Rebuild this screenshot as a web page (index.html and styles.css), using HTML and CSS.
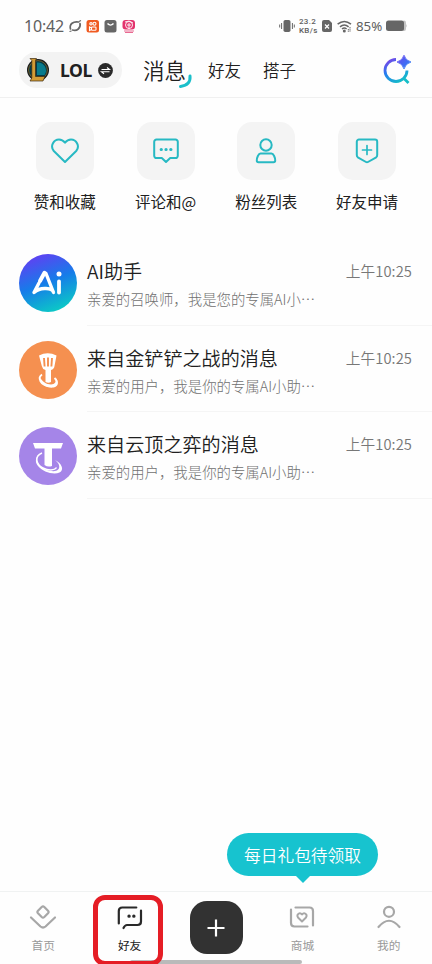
FILE: index.html
```html
<!DOCTYPE html>
<html lang="zh-CN">
<head>
<meta charset="utf-8">
<meta name="viewport" content="width=device-width, initial-scale=1">
<title>消息</title>
<link rel="stylesheet" href="styles.css">
</head>
<body>
<div class="app">
  <div class="status">
    <span class="clock">10:42</span>
    <svg class="status-left" width="70" height="16" viewBox="0 0 70 16">
      <g fill="none" stroke="#666" stroke-width="1.7" stroke-linecap="round"><path d="M2.500 11C1 6 5.500 3 10.500 4"/><path d="M12 5.500c1 4.500-3 8-7.500 6.500"/></g><path d="M1.500 13.500l2-.5M11 3.500l2-1" stroke="#666" stroke-width="1.200"/>
      <rect x="18.500" y="2" width="12.500" height="12.500" rx="2.500" fill="#f05a20"/>
      <g fill="none" stroke="#fff" stroke-width="1.100"><circle cx="23" cy="5.800" r="1.200"/><circle cx="26.500" cy="5.800" r="1.500"/><rect x="23.500" y="9" width="4.500" height="3.200" rx=".8"/><path d="M23.500 10l-2-1v3.500l2-1"/></g>
      <rect x="36.500" y="2" width="12" height="12.500" rx="2.500" fill="#666"/>
      <path d="M39.500 5.500q3 3.200 6 0" fill="none" stroke="#fff" stroke-width="1.400"/>
      <rect x="54.500" y="2" width="12.500" height="9.500" rx="3" fill="#e3336d"/>
      <path d="M56 13h10M57 14.500h8" stroke="#e86a91" stroke-width="1.200"/>
      <g fill="none" stroke="#fff" stroke-width=".9"><circle cx="61" cy="7" r="3.500"/><path d="M57 4l4-1 4 2M59 7h4M61 5v6"/></g>
    </svg>
    <svg class="vibrate" width="16" height="14" viewBox="0 0 16 14"><rect x="4.500" y="1" width="7" height="12" rx="1.800" fill="#666"/><path d="M2.600 4v6M.7 5.500v3M13.400 4v6M15.300 5.500v3" stroke="#666" stroke-width="1"/></svg>
    <span class="speed"><span>23.2</span><span>KB/s</span></span>
    <svg class="sim" width="10" height="12" viewBox="0 0 10 12"><path d="M2 0h5l3 3v7a2 2 0 0 1-2 2H2a2 2 0 0 1-2-2V2a2 2 0 0 1 2-2z" fill="#666"/><path d="M3 4.500l4 4m0-4l-4 4" stroke="#fff" stroke-width="1.200"/></svg>
    <svg class="wifi" width="15" height="13" viewBox="0 0 15 13"><g fill="none" stroke="#666" stroke-width="1.500"><path d="M.6 4.200q6.700-5.500 13.400 0M3 6.800q4.300-3.500 8.600 0M5 9q2.300-1.800 4.600 0"/></g><circle cx="7.300" cy="11" r="1.500" fill="#666"/><path d="M13 7v5M11.300 9v3" stroke="#666" stroke-width="1" stroke-dasharray="1.500 .7"/></svg>
    <span class="percent">85%</span>
    <svg class="battery" width="21" height="12" viewBox="0 0 21 12"><rect x="16" y=".5" width="4" height="10.500" rx="2" fill="#c4c4c4"/><path d="M19.500 3.500q2.500 2.300 0 4.600" fill="#c4c4c4"/><rect x="0" y=".5" width="18" height="10.500" rx="2.500" fill="#666"/></svg>
  </div>

  <header class="header">
    <div class="game">
      <svg class="game-logo" width="24" height="26" viewBox="0 0 24 26">
        <circle cx="12" cy="13" r="11" fill="#15191b"/><circle cx="12" cy="13" r="9.400" fill="#063a46" stroke="#9a752c" stroke-width=".7"/>
        <path d="M11 5.500a8 8 0 0 1 7.500 12.500H11z" fill="#087b8c"/>
        <path d="M4 1.500h6.500l-1 2v16H19l-2 4.500H4L5.800 21V3.500z" fill="#d19b36" stroke="#3c2b12" stroke-width=".7"/>
      </svg>
      <b>LOL</b>
      <svg width="15" height="15" viewBox="0 0 15 15"><circle cx="7.500" cy="7.500" r="7.400" fill="#292929"/><path d="M3.500 6.500h8L9 4.500M11.500 8.700h-8L6 10.700" fill="none" stroke="#fff" stroke-width="1.100"/></svg>
    </div>
    <nav class="tabs">
      <span class="tab current">消息<svg class="swoosh" width="15" height="15" viewBox="0 0 15 15"><path d="M12 2q1 9-9.500 10.500" fill="none" stroke="#1abfca" stroke-width="3" stroke-linecap="round"/></svg></span>
      <span class="tab">好友</span>
      <span class="tab">搭子</span>
    </nav>
    <svg class="search" width="30" height="30" viewBox="0 0 30 30">
      <defs><linearGradient id="ring" x1="0" y1="0" x2=".6" y2="1"><stop stop-color="#883be5"/><stop offset=".45" stop-color="#267cf0"/><stop offset="1" stop-color="#15bec8"/></linearGradient><linearGradient id="star" x1="0" y1="0" x2="1" y2="1"><stop stop-color="#7043f0"/><stop offset="1" stop-color="#2187f5"/></linearGradient></defs>
      <path d="M14 4.500A11 11 0 1 0 25 15.500M22 23.500l4.500 4.500" fill="none" stroke="url(#ring)" stroke-width="2.800"/>
      <path d="M22 .2q1.500 5.300 7 6.800-5.500 1.500-7 7-1.500-5.500-7-7 5.500-1.500 7-6.800z" fill="url(#star)" stroke="url(#star)" stroke-width=".8"/>
    </svg>
  </header>

  <section class="shortcuts">
    <div class="shortcut"><div class="tile"><svg width="30" height="28" viewBox="0 0 30 28"><path d="M15 25L3.800 14C-.2 9.200 3.500 2.500 9 2.500c2.800 0 4.600 1.400 6 3.200 1.400-1.800 3.200-3.200 6-3.200 5.500 0 9.200 6.700 5.200 11.500z"/></svg></div><span>赞和收藏</span></div>
    <div class="shortcut"><div class="tile"><svg width="30" height="28" viewBox="0 0 30 28"><path d="M5.500 2.500h19a2.300 2.300 0 0 1 2.300 2.300v14a2.300 2.300 0 0 1-2.300 2.300h-5.300L15 25l-4.200-3.900H5.500a2.300 2.300 0 0 1-2.300-2.300v-14a2.300 2.300 0 0 1 2.300-2.300z"/><path d="M10.200 12.500h.1M15 12.500h.1M19.800 12.500h.1" stroke-width="3.200"/></svg></div><span>评论和@</span></div>
    <div class="shortcut"><div class="tile"><svg width="30" height="28" viewBox="0 0 30 28"><circle cx="15" cy="8" r="5.700"/><path d="M9.500 16.500h11c2 0 3.800 4.200 3.700 7 0 1.200-.6 1.700-1.700 1.700h-15c-1.100 0-1.700-.5-1.700-1.700-.1-2.800 1.700-7 3.700-7z"/></svg></div><span>粉丝列表</span></div>
    <div class="shortcut"><div class="tile"><svg width="30" height="28" viewBox="0 0 30 28"><path d="M7 2.500h16a2.200 2.200 0 0 1 2.200 2.200v13.400q0 1.400-1 2.200L16 25q-1 .6-2 0L5.800 20.300q-1-.8-1-2.200V4.700A2.200 2.200 0 0 1 7 2.500z"/><path d="M15 8.500v9M10.500 13h9" stroke-width="1.700"/></svg></div><span>好友申请</span></div>
  </section>

  <main class="messages">
    <article class="message">
      <svg class="avatar" viewBox="0 0 58 58"><defs><linearGradient id="ai" x1=".25" y1="0" x2=".65" y2="1"><stop stop-color="#643df3"/><stop offset=".5" stop-color="#167ce9"/><stop offset="1" stop-color="#0bcbc5"/></linearGradient></defs><circle cx="29" cy="29" r="29" fill="url(#ai)"/><g fill="none" stroke="#fff" stroke-linecap="round" stroke-linejoin="round"><path d="M20 29L15 38.500Q20 34 27 34.500T34.500 38.500L27 19.500" stroke-width="3.400"/><path d="M21 27L25.500 18.800" stroke-width="4"/><path d="M40 27.500v11" stroke-width="3.800"/></g><circle cx="40" cy="20" r="2.500" fill="#fff"/></svg>
      <div class="content"><div class="copy"><h2>AI助手</h2><p>亲爱的召唤师，我是您的专属AI小⋯</p></div><time>上午10:25</time></div>
    </article>
    <article class="message">
      <svg class="avatar" viewBox="0 0 58 58"><circle cx="29" cy="29" r="29" fill="#f59050"/><path d="M20 14.500q8.700-4.500 17.500 0l-2 10.500q-.3 3-3.500 4V41q-2.500 1.500-5.500 0V29q-3.200-1-3.700-4z" fill="#fff"/><path d="M25 17l.6 8.500M29 16.500v9M33 17l-.6 8.500" stroke="#f59050" stroke-width="1.900"/><path d="M23 33.500c-5 3.500-1.500 10.500 7 11.500 7 .8 10-3.500 5.500-8" fill="none" stroke="#fff" stroke-width="1.800"/><path d="M20.500 36c0 7.500 8 11.500 14 10.500 5.500-1 5.500-6 2-10 1.500 4-.5 7-4.500 7-5 0-9-3.500-11.500-7.500z" fill="#fff"/></svg>
      <div class="content"><div class="copy"><h2>来自金铲铲之战的消息</h2><p>亲爱的用户，我是你的专属AI小助⋯</p></div><time>上午10:25</time></div>
    </article>
    <article class="message">
      <svg class="avatar" viewBox="0 0 58 58"><circle cx="29" cy="29" r="29" fill="#a585e8"/><path d="M14 16h30l-2 5.500h-9V39q-4.200 1.500-7.500-1V21.500h-9.500z" fill="#fff"/><path d="M23 26c-8 3-6 11.500 1 15 5 2.600 11.500 2.800 13.500-.5" fill="none" stroke="#fff" stroke-width="1.400"/><path d="M21 27.500c-6.500 4.500-1 12.500 7 15.500 8 2.800 13.500.5 12-5-.4-1.800-2-3.500-4-5 7 3.500 9.500 10 4.500 12.500-5.500 2.800-17-.5-21.500-6.500-3.500-4.500-2.500-9 2-11.500z" fill="#fff"/></svg>
      <div class="content"><div class="copy"><h2>来自云顶之弈的消息</h2><p>亲爱的用户，我是你的专属AI小助⋯</p></div><time>上午10:25</time></div>
    </article>
  </main>

  <footer class="bottom">
    <div class="gift">每日礼包待领取</div>
    <div class="nav-item"><svg width="30" height="26" viewBox="0 0 30 26"><path d="M13.700 2q1.300-1.200 2.600 0l3.700 3.800q1.200 1.200 0 2.500l-3.700 3.700q-1.300 1.200-2.600 0L10 8.300q-1.200-1.300 0-2.500z"/><path d="M3 12.500l9.500 9q2.500 2 5 0l9.500-9"/></svg><span>首页</span></div>
    <div class="nav-item active"><svg width="30" height="26" viewBox="0 0 30 26"><path d="M3.800 18.500V6q0-3.500 3.500-3.500h14M26 5.500v11q0 3.500-3.500 3.500H12q-2 0-3.500 3"/><path d="M14 11.200h.1M18.800 11.200h.1" stroke-width="3.300"/></svg><span>好友</span></div>
    <div class="nav-item"><div class="add"><svg width="20" height="20" viewBox="0 0 20 20"><path d="M10 1.500v17M1.500 10h17"/></svg></div></div>
    <div class="nav-item"><svg width="30" height="26" viewBox="0 0 30 26"><path d="M8.500 2.500h14q3.500 0 3.500 3.500v14.500M20.500 21.500h-13q-3.500 0-3.500-3.500V4.500"/><path d="M15 16.500l-4-4c-2-3.500 2-5.500 4-3 2-2.500 6-.5 4 3z" stroke-width="1.900"/></svg><span>商城</span></div>
    <div class="nav-item"><svg width="30" height="26" viewBox="0 0 30 26"><circle cx="15" cy="6.800" r="5"/><path d="M4.500 22q10.500-12.500 21 0"/></svg><span>我的</span></div>
    <div class="home-indicator"></div>
    <div class="highlight"></div>
  </footer>
</div>
</body>
</html>
```
FILE: styles.css
```css
* { box-sizing: border-box; }
body { margin: 0; background: #fefefe; color: #202020; font-family: "Noto Sans CJK SC", sans-serif; }
svg { display: block; flex: none; }
.app { width: 432px; height: 964px; display: flex; flex-direction: column; overflow: hidden; }

.status { height: 43px; padding: 9px 24px 0; display: flex; align-items: center; color: #606060; }
.clock { font: 16px/20px "Noto Sans", sans-serif; width: 44px; white-space: nowrap; letter-spacing: -.2px; }
.speed { font: 500 8px/9px Roboto, sans-serif; width: 19px; margin-left: 4px; white-space: nowrap; display: flex; flex-direction: column; letter-spacing: .3px; }
.vibrate { margin-left: 141px; }
.sim { margin-left: 4px; }
.wifi { margin-left: 5px; }
.percent { font: 13.3px/18px "Noto Sans", sans-serif; margin-left: 4px; width: 27px; white-space: nowrap; }
.battery { margin-left: 3px; }

.header { height: 55px; display: flex; align-items: center; padding: 0 20px 0 19px; border-bottom: 1px solid #f0f0f0; }
.game { width: 103px; height: 36px; border-radius: 18px; background: #f3f3f3; display: flex; align-items: center; padding-left: 7px; }
.game b { font: 700 17.5px/24px "Noto Sans", sans-serif; margin: 0 5px 0 10px; width: 33px; letter-spacing: -.4px; }
.tabs { display: flex; align-items: center; flex: 1; gap: 22px; margin: -1px 0 0 21px; }
.tab { font-size: 16.5px; line-height: 28px; font-weight: 350; }
.current { position: relative; font-size: 21.5px; }
.swoosh { position: absolute; left: 35px; top: 18px; }

.shortcuts { display: grid; grid-template-columns: repeat(4, 1fr); padding: 24px 14.5px 0 14.5px; height: 141px; }
.shortcut { display: flex; flex-direction: column; align-items: center; gap: 9px; font-size: 15.5px; line-height: 24px; }
.tile { width: 58px; height: 58px; border-radius: 15px; background: #f4f4f4; display: grid; place-items: center; }
.tile svg { fill: none; stroke: #27b9c3; stroke-width: 2; stroke-linecap: round; stroke-linejoin: round; }

.message { height: 86.6px; padding-left: 19px; display: flex; }
.avatar { width: 58px; height: 58px; margin-top: 15px; }
.content { flex: 1; margin-left: 10px; border-bottom: 1px solid #f5f5f5; display: flex; justify-content: space-between; padding: 18px 20px 0 0; }
h2 { margin: 0; font-size: 19.1px; line-height: 28px; font-weight: 350; }
p { margin: 0; font-size: 14.4px; line-height: 27px; color: #707070; font-weight: 300; white-space: nowrap; }
time { font-size: 14.7px; line-height: 27px; color: #777; font-weight: 350; white-space: nowrap; letter-spacing: .1px; }

.bottom { height: 73px; margin-top: auto; border-top: 1px solid #f0f2f2; position: relative; display: grid; grid-template-columns: repeat(5, 1fr); }
.nav-item { display: flex; flex-direction: column; align-items: center; padding-top: 13px; color: #999; font-size: 11.7px; line-height: 18px; gap: 5px; }
.nav-item > svg { fill: none; stroke: #a7a7a7; stroke-width: 2.200; stroke-linecap: round; stroke-linejoin: round; }
.nav-item.active { color: #222; }
.nav-item.active > svg { stroke: #292929; }
.add { width: 53px; height: 53px; margin: -4px 0 0 1px; border-radius: 17px; background: #323232; display: grid; place-items: center; }
.add svg { stroke: #fff; stroke-width: 2.200; }
.gift { position: absolute; left: 227px; top: -59px; width: 151px; height: 43px; border-radius: 21.5px; background: #17c3cf; color: #fff; display: grid; place-items: center; font-size: 16.7px; line-height: 24px; font-weight: 350; }
.gift::after { content: ""; position: absolute; left: 68px; top: 42px; border: 8px solid transparent; border-top-color: #17c3cf; border-bottom: 0; }
.home-indicator { position: absolute; left: 130px; bottom: 0; width: 172px; height: 4px; border-radius: 2px; background: #bababa; }
.highlight { position: absolute; left: 93px; top: 3px; width: 70px; height: 71px; border: 5px solid #e51d25; border-radius: 12px; }
```
